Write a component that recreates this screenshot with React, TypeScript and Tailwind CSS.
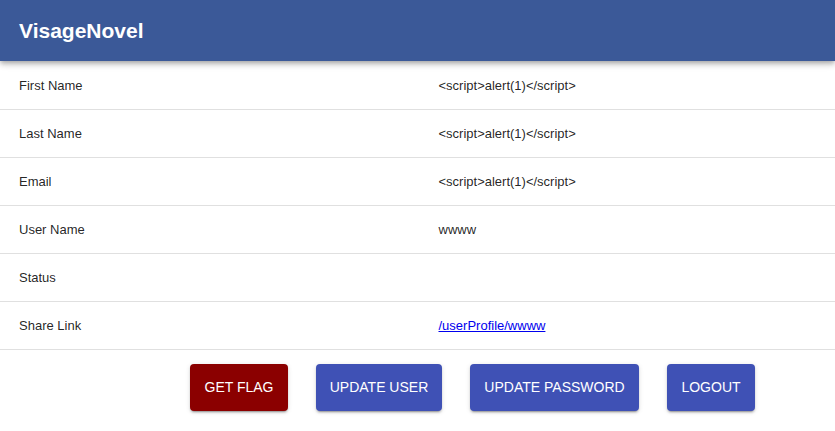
import React from "react";

const rows: { label: string; value: string; link?: boolean }[] = [
  { label: "First Name", value: "<script>alert(1)</script>" },
  { label: "Last Name", value: "<script>alert(1)</script>" },
  { label: "Email", value: "<script>alert(1)</script>" },
  { label: "User Name", value: "wwww" },
  { label: "Status", value: "" },
  { label: "Share Link", value: "/userProfile/wwww", link: true },
];

const raised =
  "h-[47px] rounded text-white text-[14px] uppercase shadow-[0_3px_1px_-2px_rgba(0,0,0,0.2),0_2px_2px_0_rgba(0,0,0,0.14),0_1px_5px_0_rgba(0,0,0,0.12)]";

export default function App() {
  return (
    <div className="min-h-screen bg-white font-['Liberation_Sans',Arial,sans-serif]">
      {/* App bar */}
      <header className="h-[61px] bg-[#3b5998] flex items-center px-[19px] shadow-[0_2px_4px_-1px_rgba(0,0,0,0.2),0_4px_5px_0_rgba(0,0,0,0.14),0_1px_10px_0_rgba(0,0,0,0.12)] relative z-10">
        <h1 className="text-white font-bold text-[21px] leading-none">VisageNovel</h1>
      </header>

      {/* Profile table */}
      <div className="mt-px">
        {rows.map((r) => (
          <div
            key={r.label}
            className="grid grid-cols-2 h-[48px] items-center border-b border-[#e0e0e0] text-[13px] text-[rgba(0,0,0,0.87)]"
          >
            <div className="pl-[19px]">{r.label}</div>
            <div className="pl-[21px]">
              {r.link ? (
                <a href="#" className="text-[#0000ee] underline">
                  {r.value}
                </a>
              ) : (
                r.value
              )}
            </div>
          </div>
        ))}
      </div>

      {/* Actions */}
      <div className="flex pl-[190px] pt-[14px] gap-[28px]">
        <button className={`${raised} w-[98px] bg-[#8b0000]`}>Get Flag</button>
        <button className={`${raised} w-[126px] bg-[#3f51b5]`}>Update User</button>
        <button className={`${raised} w-[169px] bg-[#3f51b5]`}>Update Password</button>
        <button className={`${raised} w-[88px] bg-[#3f51b5]`}>Logout</button>
      </div>
    </div>
  );
}
